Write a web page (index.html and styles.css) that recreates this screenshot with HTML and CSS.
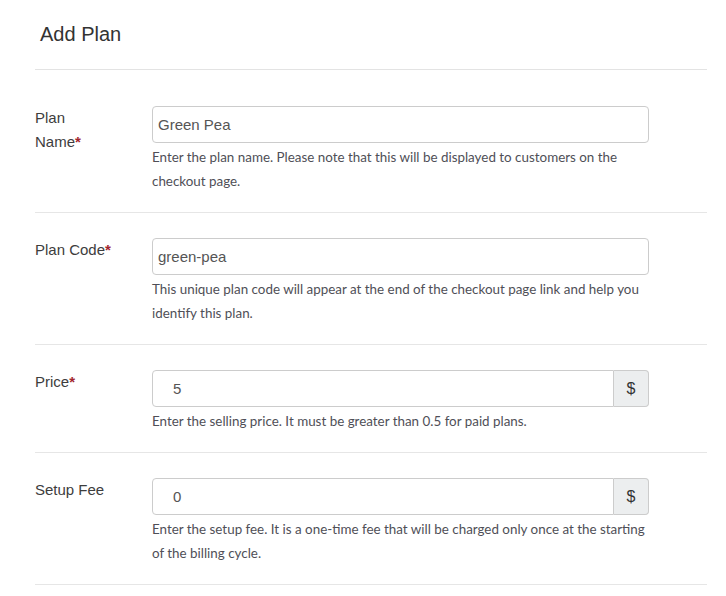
FILE: index.html
```html
<!DOCTYPE html>
<html>
<head>
<meta charset="utf-8">
<link rel="stylesheet" href="styles.css">
</head>
<body>
<div class="panel">
  <div class="panel-head">
    <h1 class="title">Add Plan</h1>
  </div>
  <div class="rows">
    <div class="row">
      <label class="label">Plan Name<span class="req">*</span></label>
      <div class="field">
        <div class="input">Green Pea</div>
        <p class="help">Enter the plan name. Please note that this will be displayed to customers on the checkout page.</p>
      </div>
    </div>
    <div class="row">
      <label class="label">Plan Code<span class="req">*</span></label>
      <div class="field">
        <div class="input">green-pea</div>
        <p class="help">This unique plan code will appear at the end of the checkout page link and help you identify this plan.</p>
      </div>
    </div>
    <div class="row">
      <label class="label">Price<span class="req">*</span></label>
      <div class="field">
        <div class="group">
          <div class="input input-num">5</div>
          <div class="addon">$</div>
        </div>
        <p class="help">Enter the selling price. It must be greater than 0.5 for paid plans.</p>
      </div>
    </div>
    <div class="row">
      <label class="label">Setup Fee</label>
      <div class="field">
        <div class="group">
          <div class="input input-num">0</div>
          <div class="addon">$</div>
        </div>
        <p class="help">Enter the setup fee. It is a one-time fee that will be charged only once at the starting of the billing cycle.</p>
      </div>
    </div>
  </div>
</div>
</body>
</html>
```
FILE: styles.css
```css
html, body {
  margin: 0;
  padding: 0;
  background: #fff;
}
body {
  font-family: "Liberation Sans", Arial, sans-serif;
  color: #333;
}
.panel {
  width: 672px;
  margin-left: 35px;
}
.panel-head {
  padding: 22px 5px 23px;
  border-bottom: 1px solid #e3e3e3;
  margin-bottom: 11px;
}
.title {
  margin: 0;
  font-size: 20px;
  line-height: 24px;
  font-weight: normal;
  color: #333;
}
.row {
  display: flex;
  padding: 25px 0 19px;
  border-bottom: 1px solid #e6e6e6;
}
.label {
  width: 78px;
  margin-right: 39px;
  font-size: 15px;
  line-height: 24px;
  color: #3d3d3d;
}
.req {
  color: #a3262e;
  font-weight: bold;
}
.field {
  width: 497px;
}
.input {
  box-sizing: border-box;
  height: 37px;
  border: 1px solid #ccc;
  border-radius: 4px;
  padding: 0 5px;
  font-size: 15px;
  line-height: 35px;
  color: #555;
  background: #fff;
}
.group {
  display: flex;
}
.group .input {
  flex: 1;
  border-radius: 4px 0 0 4px;
}
.input-num {
  padding-left: 20px;
}
.addon {
  box-sizing: border-box;
  width: 35px;
  height: 37px;
  border: 1px solid #ccc;
  border-left: 0;
  border-radius: 0 4px 4px 0;
  background: #eceeef;
  text-align: center;
  font-size: 16px;
  line-height: 35px;
  color: #333;
}
.help {
  margin: 0;
  padding-top: 2px;
  font-family: Lato, "Open Sans", sans-serif;
  font-size: 13.4px;
  line-height: 24px;
  color: #4f4f57;
}
```
